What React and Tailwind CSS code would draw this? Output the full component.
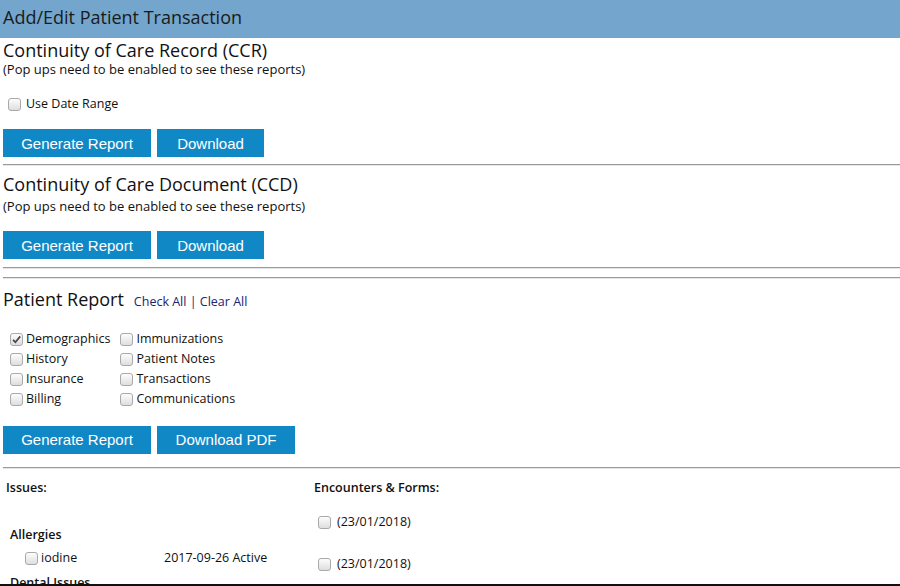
import React, { useState } from "react";

const font = { fontFamily: '"Open Sans", "DejaVu Sans", sans-serif' };

function Box({ checked, onChange }) {
  return (
    <span className="relative inline-block w-[13px] h-[13px] align-[-1px]">
      <input
        type="checkbox"
        checked={checked}
        onChange={onChange}
        className="appearance-none block w-[13px] h-[13px] m-0 border border-[#a9a9a9] rounded-[3px] bg-gradient-to-b from-[#fdfdfd] to-[#dedede]"
      />
      {checked && (
        <svg
          viewBox="0 0 13 13"
          className="absolute left-0 top-0 w-[13px] h-[13px] pointer-events-none"
        >
          <path
            d="M3 6.8 L5.4 9.2 L10.2 3.4"
            fill="none"
            stroke="#4a4a4a"
            strokeWidth="1.8"
          />
        </svg>
      )}
    </span>
  );
}

function Btn({ children, w }) {
  return (
    <button
      className={`h-[28px] ${w} bg-[#1188c6] text-white text-[15px] leading-none`}
      style={{ fontFamily: '"Liberation Sans", Arial, sans-serif' }}
    >
      {children}
    </button>
  );
}

function Rule() {
  return <div className="ml-[3px] border-t border-[#9a9a9a] border-b border-b-[#e6e6e6]" />;
}

export default function App() {
  const [report, setReport] = useState({
    Demographics: true,
    History: false,
    Insurance: false,
    Billing: false,
    Immunizations: false,
    "Patient Notes": false,
    Transactions: false,
    Communications: false,
  });
  const [dateRange, setDateRange] = useState(false);

  const toggle = (k) => setReport({ ...report, [k]: !report[k] });
  const col1 = ["Demographics", "History", "Insurance", "Billing"];
  const col2 = ["Immunizations", "Patient Notes", "Transactions", "Communications"];

  return (
    <div className="w-[900px] h-[586px] overflow-hidden bg-white text-[#111] border-b-2 border-[#111]" style={font}>
      <div className="h-[38px] bg-[#73a5cd] px-[3px] pt-[5px] text-[18px] leading-[24px] text-[#1a1a1a]">
        Add/Edit Patient Transaction
      </div>

      <div className="px-[3px]">
        <div className="text-[18px] leading-[24px]">Continuity of Care Record (CCR)</div>
        <div className="text-[13px] leading-[15px]">(Pop ups need to be enabled to see these reports)</div>
        <div className="mt-[19px] flex items-center gap-[5px] pl-[5px] text-[12.5px] leading-[16px]">
          <Box checked={dateRange} onChange={() => setDateRange(!dateRange)} />
          <span>Use Date Range</span>
        </div>
        <div className="mt-[17px] flex gap-[6px]">
          <Btn w="w-[148px]">Generate Report</Btn>
          <Btn w="w-[107px]">Download</Btn>
        </div>
      </div>
      <div className="mt-[7px]"><Rule /></div>

      <div className="px-[3px]">
        <div className="text-[18px] leading-[24px] pt-[6px]">Continuity of Care Document (CCD)</div>
        <div className="mt-[2px] text-[13px] leading-[16px]">(Pop ups need to be enabled to see these reports)</div>
        <div className="mt-[17px] flex gap-[6px]">
          <Btn w="w-[148px]">Generate Report</Btn>
          <Btn w="w-[107px]">Download</Btn>
        </div>
      </div>
      <div className="mt-[8px]"><Rule /></div>
      <div className="mt-[8px]"><Rule /></div>

      <div className="px-[3px]">
        <div className="pt-[8px] flex items-baseline gap-[10px]">
          <span className="text-[18px] leading-[24px]">Patient Report</span>
          <span className="text-[12.5px] text-[#1c2370]">
            <a href="#">Check All</a> | <a href="#">Clear All</a>
          </span>
        </div>
        <div className="mt-[18px] pl-[7px] flex gap-[10px] text-[12.5px]">
          {[col1, col2].map((col, i) => (
            <div key={i} className="flex flex-col">
              {col.map((k) => (
                <label key={k} className="h-[20px] flex items-center gap-[3px]">
                  <Box checked={report[k]} onChange={() => toggle(k)} />
                  <span>{k}</span>
                </label>
              ))}
            </div>
          ))}
        </div>
        <div className="mt-[16px] flex gap-[6px]">
          <Btn w="w-[148px]">Generate Report</Btn>
          <Btn w="w-[138px]">Download PDF</Btn>
        </div>
      </div>
      <div className="mt-[13px]"><Rule /></div>

      <div className="flex text-[12.5px] pt-[10px]">
        <div className="w-[307px] pl-[6px]">
          <div className="font-semibold leading-[18px]">Issues:</div>
          <div className="mt-[29px] pl-[4px] font-semibold leading-[18px]">Allergies</div>
          <div className="mt-[6px] flex items-center h-[18px]">
            <span className="w-[158px] pl-[19px] flex items-center gap-[3px]">
              <Box checked={false} onChange={() => {}} />
              <span>iodine</span>
            </span>
            <span>2017-09-26 Active</span>
          </div>
          <div className="mt-[6px] pl-[4px] font-semibold leading-[18px]">Dental Issues</div>
        </div>
        <div className="pl-[7px]">
          <div className="font-semibold leading-[18px]">Encounters &amp; Forms:</div>
          <div className="mt-[17px] pl-[4px] flex items-center gap-[6px] h-[18px]">
            <Box checked={false} onChange={() => {}} />
            <span>(23/01/2018)</span>
          </div>
          <div className="mt-[24px] pl-[4px] flex items-center gap-[6px] h-[18px]">
            <Box checked={false} onChange={() => {}} />
            <span>(23/01/2018)</span>
          </div>
        </div>
      </div>
    </div>
  );
}
